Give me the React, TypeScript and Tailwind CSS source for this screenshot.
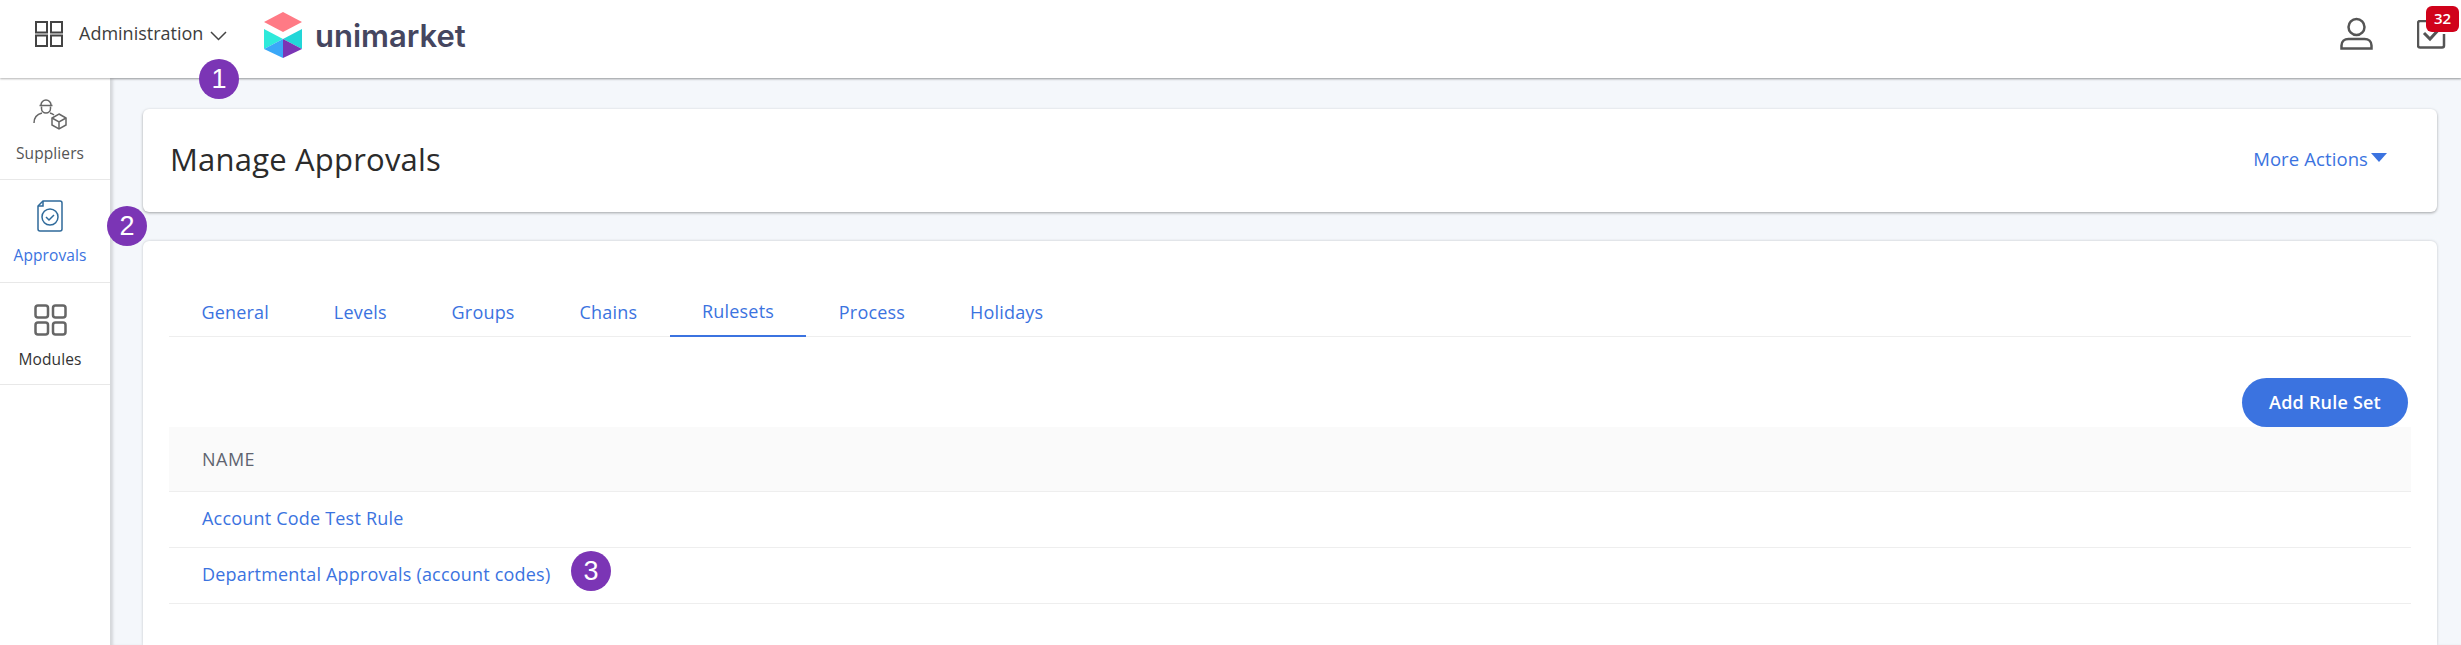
const tabs = ["General", "Levels", "Groups", "Chains", "Rulesets", "Process", "Holidays"];
const rows = ["Account Code Test Rule", "Departmental Approvals (account codes)"];

const Marker = ({ n, className }: { n: number; className: string }) => (
  <div
    className={`absolute z-20 flex h-10 w-10 items-center justify-center rounded-full bg-[#7b35b5] text-[27px] text-white font-['Liberation_Sans',sans-serif] ${className}`}
  >
    {n}
  </div>
);

const GridIcon = () => (
  <svg width="28" height="26" viewBox="0 0 28 26" fill="none" stroke="#444" strokeWidth="2">
    <rect x="1" y="1" width="11" height="10.5" />
    <rect x="16" y="1" width="11" height="10.5" />
    <rect x="1" y="14.5" width="11" height="10.5" />
    <rect x="16" y="14.5" width="11" height="10.5" />
  </svg>
);

const Logo = () => (
  <svg width="40" height="46" viewBox="0 0 40 46">
    <polygon points="20,0 39,10 20,20 1,10" fill="#ff7a85" />
    <polygon points="1,17 20,27 1,37" fill="#2eeadb" />
    <polygon points="39,17 20,27 39,37" fill="#22d6d8" />
    <polygon points="1,37 20,27 20,46 1,37" fill="#3aa8f8" />
    <polygon points="39,37 20,27 20,46 39,37" fill="#7b35b5" />
  </svg>
);

const SupplierIcon = () => (
  <svg width="34" height="32" viewBox="0 0 34 32" fill="none" stroke="#666" strokeWidth="1.5">
    <path d="M8 7a5 5 0 0 1 10 0" />
    <path d="M6.500 7.500h13" />
    <path d="M8.500 8.500v2a4.500 4.500 0 0 0 9 0v-2" />
    <path d="M1 25c0-6 4-9 8-10M17 15c1.500.5 3 1.200 4 2" />
    <path d="M26 16l7 4v7l-7 4-7-4v-7z" />
    <path d="M19 20l7 4 7-4M26 24v7" />
  </svg>
);

const ApprovalIcon = () => (
  <svg width="26" height="32" viewBox="0 0 26 32" fill="none" stroke="#2f6a9a" strokeWidth="1.500">
    <path d="M6 1h17a2 2 0 0 1 2 2v26a2 2 0 0 1-2 2H3a2 2 0 0 1-2-2V6z" />
    <path d="M1 6h5V1" />
    <circle cx="13" cy="17" r="8" />
    <path d="M9 17l3 3 5-5" />
  </svg>
);

const ModulesIcon = () => (
  <svg width="33" height="32" viewBox="0 0 33 32" fill="none" stroke="#666" strokeWidth="2.500">
    <rect x="1.500" y="1.500" width="12.500" height="12" rx="2.500" />
    <rect x="19" y="1.500" width="12.500" height="12" rx="2.500" />
    <rect x="1.500" y="18.500" width="12.500" height="12" rx="2.500" />
    <rect x="19" y="18.500" width="12.500" height="12" rx="2.500" />
  </svg>
);

const UserIcon = () => (
  <svg width="33" height="33" viewBox="0 0 33 33" fill="none" stroke="#555" strokeWidth="2.500">
    <circle cx="16.500" cy="10" r="8" />
    <path d="M1.500 31.500v-3c0-4 3-6.500 7-6.500h16c4 0 7 2.500 7 6.500v3z" />
  </svg>
);

const CheckIcon = () => (
  <svg width="29" height="29" viewBox="0 0 29 29" fill="none" stroke="#555" strokeWidth="2.500">
    <path d="M27 14v11.500a2 2 0 0 1-2 2H3a2 2 0 0 1-2-2V3a2 2 0 0 1 2-2h19" />
    <path d="M7 13l6 6 12-13" strokeWidth="3" />
  </svg>
);

const SideItem = ({ label, icon, color, box }: { label: string; icon: React.ReactNode; color: string; box: string }) => (
  <div className={`flex flex-col items-center border-b border-[#e8e8e8] pr-[10px] ${box}`}>
    <div className="flex h-[34px] items-center">{icon}</div>
    <div className={`mt-[12px] text-[15.5px] leading-5 tracking-[0.1px] ${color}`}>{label}</div>
  </div>
);

export default function App() {
  return (
    <div className="relative flex h-[645px] flex-col overflow-hidden bg-white font-['Open_Sans','Noto_Sans',sans-serif]">
      <Marker n={1} className="left-[199px] top-[59px]" />
      <Marker n={2} className="left-[107px] top-[206px]" />
      <Marker n={3} className="left-[571px] top-[551px]" />

      {/* Header */}
      <header className="z-10 flex h-[78px] shrink-0 items-center bg-white pl-[35px] pr-[3px] shadow-[0_1px_2px_rgba(0,0,0,0.3)]">
        <div className="-mt-[11px] flex items-center">
          <GridIcon />
          <span className="ml-[16px] w-[124px] whitespace-nowrap text-[18px] text-[#3d3d3d]">Administration</span>
          <svg className="ml-[7px] mt-[4px]" width="17" height="10" viewBox="0 0 17 10" fill="none" stroke="#444" strokeWidth="1.500">
            <path d="M1 1l7.500 7.500L16 1" />
          </svg>
        </div>
        <div className="-mt-[9px] ml-[36px] flex items-center">
          <Logo />
          <span className="ml-[12px] mt-[2px] text-[31px] font-semibold leading-none text-[#45465f] font-['Inter',sans-serif]">unimarket</span>
        </div>
        <div className="ml-auto -mt-[12px] flex items-center">
          <UserIcon />
          <div className="relative ml-[44px] mr-[12px] mt-[2px]">
            <CheckIcon />
            <div className="absolute -right-[13px] -top-[14px] flex h-[26px] w-[33px] items-center justify-center rounded-[6px] bg-[#d0021b] text-[15px] font-semibold text-white">
              32
            </div>
          </div>
        </div>
      </header>

      <div className="flex min-h-0 flex-1">
        {/* Sidebar */}
        <aside className="w-[110px] shrink-0 bg-white">
          <SideItem label="Suppliers" icon={<SupplierIcon />} color="text-[#555]" box="h-[102px] pt-[19px]" />
          <SideItem label="Approvals" icon={<ApprovalIcon />} color="text-[#3b73e0]" box="h-[103px] pt-[19px]" />
          <SideItem label="Modules" icon={<ModulesIcon />} color="text-[#333]" box="h-[102px] pt-[20px]" />
        </aside>

        {/* Main */}
        <main className="flex min-w-0 flex-1 flex-col bg-[#f4f7fb] pl-[33px] pr-[24px] pt-[31px] shadow-[inset_3px_1px_3px_rgba(0,0,0,0.13)]">
          <div className="flex h-[103px] shrink-0 items-center justify-between rounded-[6px] bg-white pl-[27px] pr-[50px] shadow-[0_1px_3px_rgba(0,0,0,0.35)]">
            <h1 className="-mt-[2px] text-[31px] font-normal tracking-[0.2px] text-[#2b2b2b]">Manage Approvals</h1>
            <div className="-mt-[3px] flex items-center text-[#3b73e0]">
              <span className="text-[18.5px] tracking-[0.1px]">More Actions</span>
              <svg className="mb-[4px] ml-[3px]" width="16" height="9" viewBox="0 0 16 9">
                <path d="M0 0h16L8 9z" fill="#3b73e0" />
              </svg>
            </div>
          </div>

          <section className="mt-[29px] min-h-0 flex-1 rounded-t-[6px] bg-white px-[26px] pt-[46px] shadow-[0_0_3px_rgba(0,0,0,0.2)]">
            <nav className="flex h-[50px] border-b border-[#eeeeee]">
              {tabs.map((t) => (
                <div
                  key={t}
                  className={`flex h-[50px] items-center px-[32.4px] text-[18px] tracking-[0.2px] text-[#3b73e0] ${t === "Rulesets" ? "border-b-2 border-[#3b73e0]" : ""}`}
                >
                  {t}
                </div>
              ))}
            </nav>

            <div className="flex justify-end pr-[3px] pt-[41px]">
              <button className="h-[49px] w-[166px] rounded-full bg-[#3b73e0] text-[18px] font-semibold tracking-[0.2px] text-white">Add Rule Set</button>
            </div>

            <div className="flex h-[65px] items-center border-b border-[#eeeeee] bg-[#fafafa] pl-[33px] text-[18px] tracking-[0.5px] text-[#5f6470]">NAME</div>
            {rows.map((r) => (
              <div key={r} className="flex h-[56px] items-center border-b border-[#eeeeee] pb-[2px] pl-[33px] text-[18px] tracking-[0.2px] text-[#3b73e0]">
                {r}
              </div>
            ))}
          </section>
        </main>
      </div>
    </div>
  );
}
